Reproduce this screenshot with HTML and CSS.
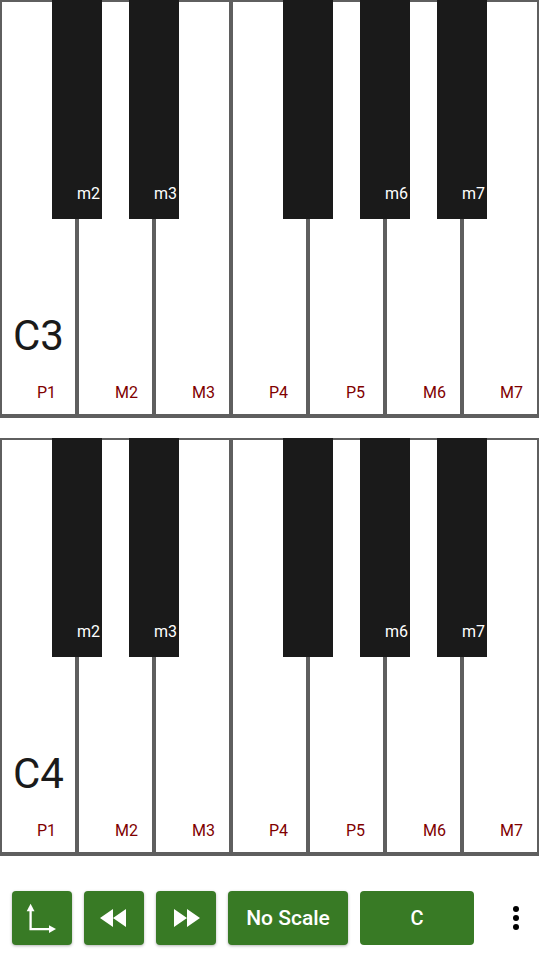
FILE: index.html
```html
<!DOCTYPE html>
<html lang="en">
<head>
  <meta charset="UTF-8" />
  <meta name="viewport" content="width=device-width, initial-scale=1.0"/>
  <title>Piano Intervals</title>
  <link rel="stylesheet" href="styles.css">
</head>
<body>

<!-- Upper octave -->
<section class="keyboard">
  <div class="white-keys">
    <div class="white first"><span class="octave">C3</span><span class="interval">P1</span></div>
    <div class="white"><span class="interval">M2</span></div>
    <div class="white"><span class="interval">M3</span></div>
    <div class="white"><span class="interval">P4</span></div>
    <div class="white"><span class="interval">P5</span></div>
    <div class="white"><span class="interval">M6</span></div>
    <div class="white"><span class="interval">M7</span></div>
  </div>
  <div class="black-keys">
    <div class="black">m2</div>
    <div class="black">m3</div>
    <div class="black skip"></div>
    <div class="black">m6</div>
    <div class="black">m7</div>
  </div>
</section>

<!-- Lower octave -->
<section class="keyboard lower">
  <div class="white-keys">
    <div class="white first"><span class="octave">C4</span><span class="interval">P1</span></div>
    <div class="white"><span class="interval">M2</span></div>
    <div class="white"><span class="interval">M3</span></div>
    <div class="white"><span class="interval">P4</span></div>
    <div class="white"><span class="interval">P5</span></div>
    <div class="white"><span class="interval">M6</span></div>
    <div class="white"><span class="interval">M7</span></div>
  </div>
  <div class="black-keys">
    <div class="black">m2</div>
    <div class="black">m3</div>
    <div class="black skip"></div>
    <div class="black">m6</div>
    <div class="black">m7</div>
  </div>
</section>

<!-- Toolbar -->
<nav class="toolbar">
  <button class="btn icon-btn" aria-label="Axes">
    <svg width="34" height="34" viewBox="0 0 34 34">
      <path d="M5.6 9V28.1H25" fill="none" stroke="#fff" stroke-width="2.3"/>
      <path d="M5.6 2.7L9.5 10.2H1.7Z" fill="#fff"/>
      <path d="M31 28.1L24 24.3V31.9Z" fill="#fff"/>
    </svg>
  </button>
  <button class="btn icon-btn" aria-label="Previous">
    <svg width="28" height="18" viewBox="0 0 28 18"><path d="M0 9L13 0V18ZM13 9L26 0V18Z" fill="#fff"/></svg>
  </button>
  <button class="btn icon-btn" aria-label="Next">
    <svg width="28" height="18" viewBox="0 0 28 18"><path d="M2 0L15 9L2 18ZM15 0L28 9L15 18Z" fill="#fff"/></svg>
  </button>
  <button class="btn scale-btn">No Scale</button>
  <button class="btn key-btn">C</button>
  <button class="more" aria-label="More">
    <span class="dot"></span><span class="dot"></span><span class="dot"></span>
  </button>
</nav>

</body>
</html>
```

FILE: styles.css
```css
body { font-family: Roboto, sans-serif; margin: 0; padding: 0; background: #fff; width: 540px; height: 960px; overflow: hidden; }

.keyboard { position: relative; width: 539px; height: 418px; box-sizing: border-box; padding: 2px 2px 4px 2px; background: #5f5f5f; }
.keyboard.lower { margin-top: 20px; }
.white-keys { display: flex; gap: 4px; height: 100%; }
.white { position: relative; width: 73px; background: #fff; display: flex; flex-direction: column; justify-content: flex-end; padding-left: 36px; box-sizing: border-box; }
.interval { font-size: 16px; line-height: 19px; color: #800000; margin-bottom: 12px; }
.first .interval { margin-left: -1px; }
.octave { position: absolute; left: 11px; bottom: 54px; font-size: 42px; line-height: 49px; color: #1a1a1a; }

.black-keys { position: absolute; top: 0; left: 0; height: 219px; display: flex; gap: 27px; padding-left: 52px; }
.black { width: 50px; background: #1a1a1a; color: #fff; font-size: 16px; line-height: 19px; box-sizing: border-box; padding: 184px 0 0 25px; }
.black.skip { margin-left: 77px; }

.toolbar { display: flex; align-items: center; gap: 12px; margin-top: 35px; padding-left: 12px; }
.btn { height: 54px; padding: 0; border: none; border-radius: 4px; background: #387a25; color: #fff; font-family: Roboto, sans-serif; font-size: 21px; font-weight: 500; box-shadow: 0 1px 3px rgba(0, 0, 0, 0.3); display: flex; align-items: center; justify-content: center; }
.icon-btn { width: 60px; }
.scale-btn { width: 120px; }
.key-btn { width: 114px; font-size: 20px; box-shadow: none; }
.more { width: 24px; height: 32px; margin-left: 18px; padding: 0; border: none; background: none; display: flex; flex-direction: column; align-items: center; justify-content: center; gap: 3px; }
.dot { width: 6px; height: 6px; border-radius: 50%; background: #000; }
```
